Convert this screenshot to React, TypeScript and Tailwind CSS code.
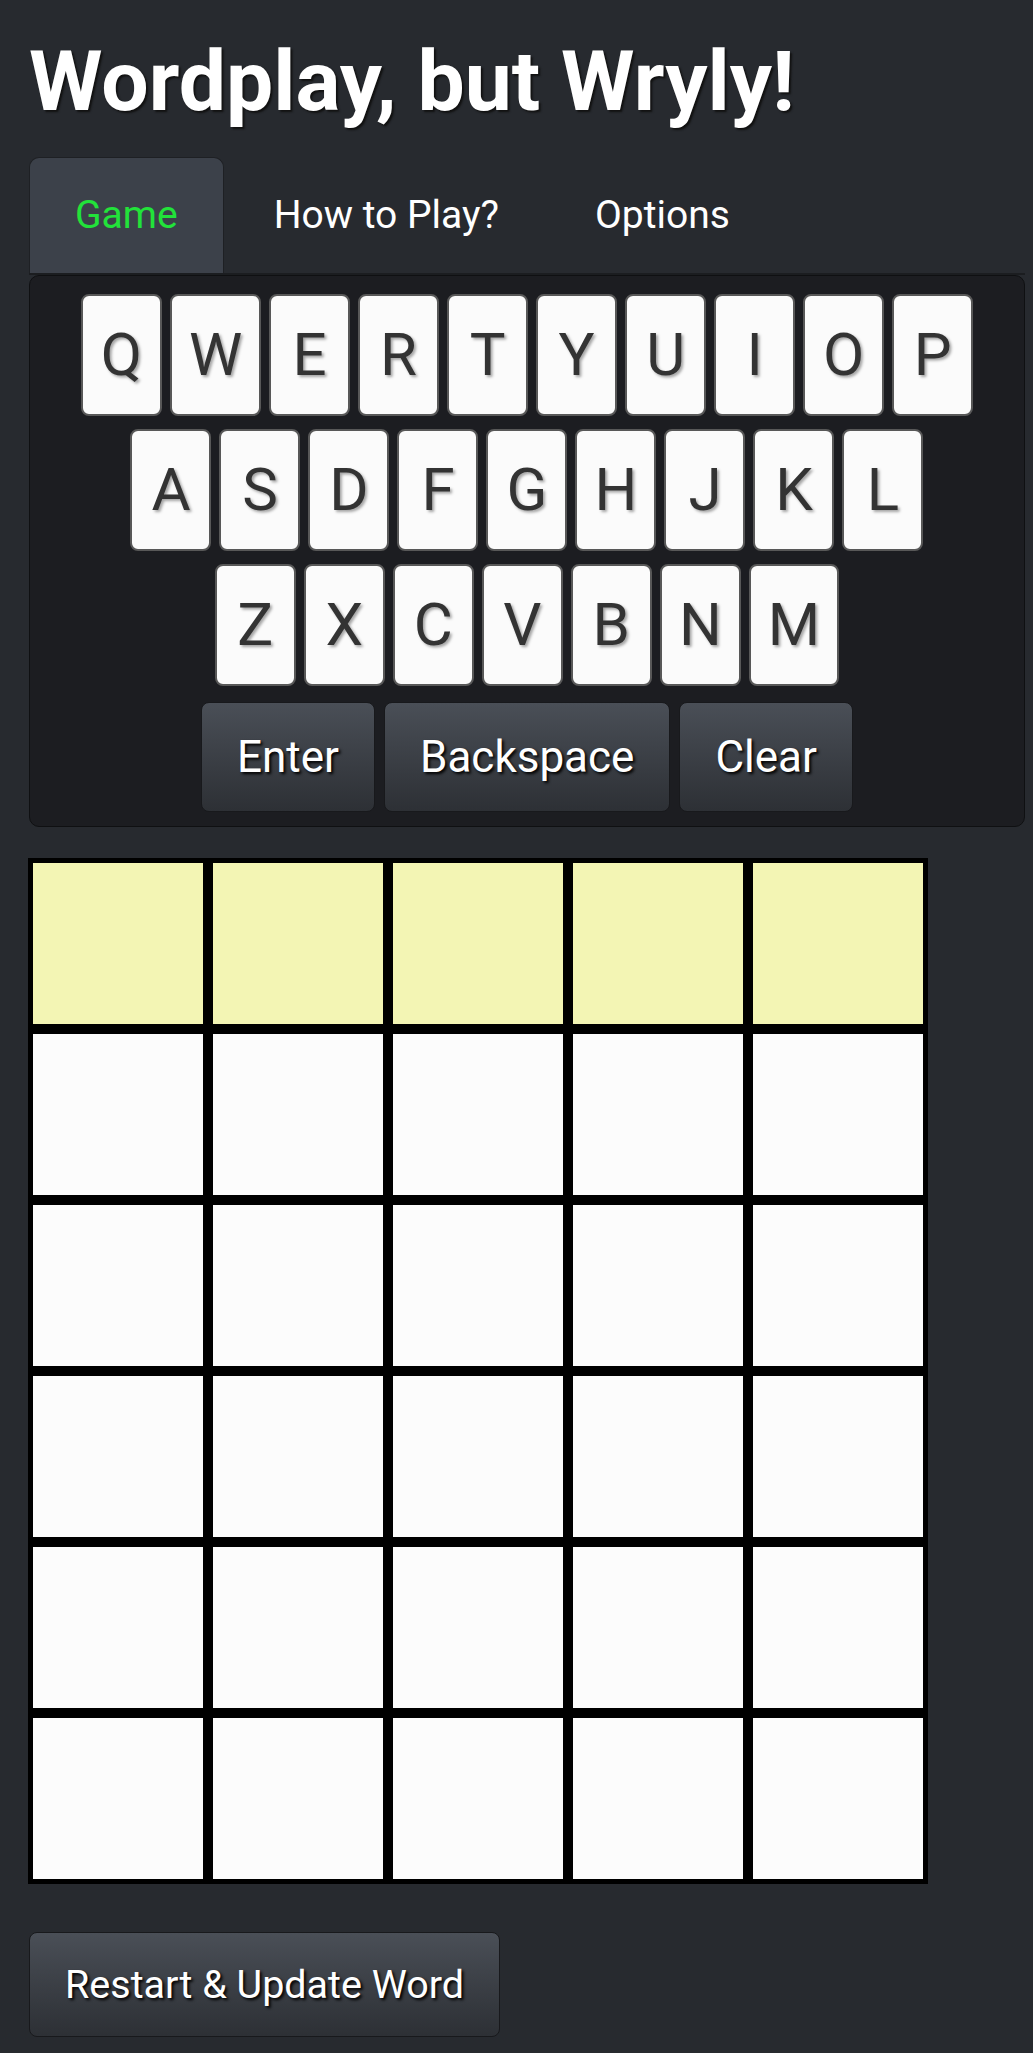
const ROWS = ['QWERTYUIOP', 'ASDFGHJKL', 'ZXCVBNM'];
const TABS = ['Game', 'How to Play?', 'Options'];

function Key({ letter }: { letter: string }) {
  return (
    <button className="h-[122px] min-w-[81px] px-[17px] rounded-[8px] border-2 border-[#585858] bg-[#fbfbfb] text-[60px] leading-none text-[#333] [text-shadow:2px_2px_3px_rgba(0,0,0,0.35)]">
      {letter}
    </button>
  );
}

function ActionButton({ label }: { label: string }) {
  return (
    <button className="h-[110px] px-[35px] rounded-[8px] border border-[#18191c] bg-gradient-to-b from-[#4a4f57] to-[#2d3035] text-[44px] leading-none text-white [text-shadow:2px_2px_3px_#000]">
      {label}
    </button>
  );
}

export default function App() {
  const board = Array.from({ length: 6 }, (_, r) => r);

  return (
    <div className="min-h-screen bg-[#272a2f] pl-[29px] pr-[8px] pt-[30px] pb-[17px] font-['Roboto',sans-serif]">
      <h1 className="text-[84px] font-bold leading-[103px] text-white [text-shadow:2px_2px_2px_#111]">
        Wordplay, but Wryly!
      </h1>

      <div className="mt-[24px] flex gap-[4px] border-b-2 border-[#1b1d20]">
        {TABS.map((t, i) => (
          <div
            key={t}
            className={
              i === 0
                ? 'h-[116px] flex items-center px-[45px] rounded-t-[10px] border border-b-0 border-[#1e2024] bg-[#3c414a] text-[39px] text-[#22e23a]'
                : 'h-[116px] flex items-center px-[46px] text-[39px] text-white'
            }
          >
            {t}
          </div>
        ))}
      </div>

      <div className="rounded-[10px] border border-[#0f1012] bg-[#1c1d21] pt-[18px] pb-[14px] flex flex-col items-center">
        <div className="flex flex-col items-center gap-[13px]">
          {ROWS.map(row => (
            <div key={row} className="flex gap-2">
              {row.split('').map(l => (
                <Key key={l} letter={l} />
              ))}
            </div>
          ))}
        </div>
        <div className="mt-[16px] flex gap-[9px]">
          <ActionButton label="Enter" />
          <ActionButton label="Backspace" />
          <ActionButton label="Clear" />
        </div>
      </div>

      <div className="mt-[31px] -ml-px w-[900px] flex flex-col">
        {board.map(r => (
          <div key={r} className="flex">
            {[0, 1, 2, 3, 4].map(c => (
              <div
                key={c}
                className={
                  r === 0
                    ? 'h-[171px] w-[180px] border-[5px] border-black bg-[#f3f5b4]'
                    : 'h-[171px] w-[180px] border-[5px] border-black bg-[#fcfcfc]'
                }
              />
            ))}
          </div>
        ))}
      </div>

      <button className="mt-[48px] h-[105px] px-[35px] rounded-[8px] border border-[#18191c] bg-gradient-to-b from-[#4a4f57] to-[#2d3035] text-[39.5px] leading-none text-white [text-shadow:2px_2px_3px_#000]">
        Restart &amp; Update Word
      </button>
    </div>
  );
}
